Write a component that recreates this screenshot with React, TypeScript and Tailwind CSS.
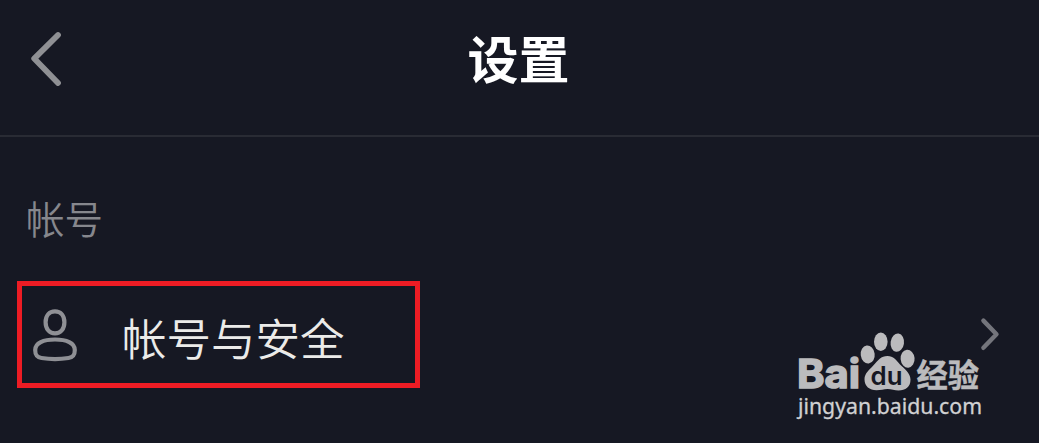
function App() {
  return (
    <div className="h-[443px] w-full overflow-hidden bg-[#161823] font-['Noto_Sans_CJK_SC',sans-serif] relative">
      {/* Header */}
      <header className="grid h-[137px] grid-cols-[1fr_auto_1fr] items-center border-b-2 border-[#292b34] pr-[2px] pb-[19px]">
        <button className="ml-[30px] w-8" aria-label="返回">
          <BackIcon />
        </button>
        <h1 className="-mt-0.5 text-[51px] leading-[60px] font-bold text-white">设置</h1>
      </header>

      {/* Account section */}
      <main className="pt-[50px]">
        <h2 className="pl-[26px] text-[38.5px] leading-[60px] font-[350] text-[#86878d]">帐号</h2>

        <div className="mt-[34px] ml-[17px] flex h-[107px] items-center justify-between">
          <div className="flex h-full w-[403px] items-center border-[5px] border-[#ed1c24] pl-[10px]">
            <UserIcon />
            <span className="ml-[44px] pt-1 text-[44.5px] leading-[60px] font-[350] text-[#ebebe9]">
              帐号与安全
            </span>
          </div>
          <ForwardIcon />
        </div>
      </main>

      <Watermark />
    </div>
  )
}

function BackIcon() {
  return (
    <svg width="32" height="56" viewBox="0 0 32 56" fill="none" stroke="#8f9094" strokeWidth="5.8" strokeLinecap="round" strokeLinejoin="round">
      <path d="M28 5 4.2 28.6 28 53" />
    </svg>
  )
}

function ForwardIcon() {
  return (
    <svg className="mr-[38px]" width="22" height="36" viewBox="0 0 22 36" fill="none" stroke="#74757c" strokeWidth="4.4" strokeLinecap="round" strokeLinejoin="round">
      <path d="M4.4 3.6 17.5 17.2 4.4 30.8" />
    </svg>
  )
}

function UserIcon() {
  return (
    <svg width="46" height="54" viewBox="0 0 46 54" fill="none" stroke="#8f9095" strokeWidth="4.2">
      <path d="M23 3.4c5.8 0 9.4 4.3 9.4 10.8S28.8 25.4 23 25.4s-9.4-4.7-9.4-11.2S17.2 3.4 23 3.4Z" />
      <path d="M23 31.5c11.500 0 19.800 3.500 19.800 10.500 0 5.200-1.500 7.200-6.300 8-8.500 1.300-18.500 1.300-27 0-4.800-.8-6.300-2.800-6.300-8C3.200 35 11.500 31.500 23 31.500Z" />
    </svg>
  )
}

function Watermark() {
  return (
    <svg className="absolute top-[328px] left-[790px]" width="200" height="96" viewBox="790 328 200 96">
      <g fill="#bbbbbd" stroke="#bbbbbd" strokeWidth="0">
        <text x="797" y="388.3" fontSize="40" fontWeight="700" strokeWidth="1.6" textLength="63" lengthAdjust="spacingAndGlyphs" fontFamily="Inter, sans-serif">
          Bai
        </text>
        {/* Paw */}
        <ellipse cx="867.7" cy="354.5" rx="7" ry="9" transform="rotate(-7 867.7 354.5)" />
        <ellipse cx="880.8" cy="341.7" rx="6.8" ry="9.2" />
        <ellipse cx="897.3" cy="342.7" rx="6.7" ry="9.2" transform="rotate(8 897.3 342.7)" />
        <ellipse cx="907.6" cy="358.7" rx="7" ry="9" transform="rotate(-5 907.6 358.7)" />
        <path d="M887.5 356c6 0 8.500 4 12.500 8.500 4 4 10.500 8.500 10.500 15 0 7.500-5 11-12 11-4 0-7-1.500-11-1.500s-6.500 1.300-11 1.300c-7 0-12-4-12-11 0-6 5-9.500 9-14 4.500-5 7.500-9.300 14-9.300Z" />
        <text x="916.5" y="386.5" fontSize="32" fontWeight="700" strokeWidth=".5" textLength="62.5" lengthAdjust="spacingAndGlyphs" fontFamily="Noto Sans CJK SC, sans-serif">
          经验
        </text>
      </g>
      <text x="870.5" y="384.5" fontSize="25" fontWeight="600" fill="#161823" textLength="32" lengthAdjust="spacingAndGlyphs" fontFamily="Inter, sans-serif">
        du
      </text>
      <text x="798" y="413.5" fontSize="21" fill="#d0d0d2" stroke="#d0d0d2" strokeWidth=".3" textLength="184" lengthAdjust="spacingAndGlyphs" fontFamily="Noto Sans, sans-serif">
        jingyan.baidu.com
      </text>
    </svg>
  )
}

export default App
